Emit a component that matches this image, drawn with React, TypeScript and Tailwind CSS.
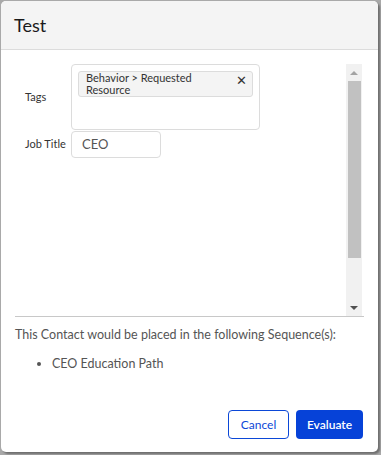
import React from 'react';

const App = () => {
  return (
    <div className="w-[381px] h-[455px] bg-[#a9a9a9] pl-px pt-px" style={{ fontFamily: 'Lato, "Open Sans", sans-serif' }}>
      <div className="w-[377px] h-[451px] bg-white rounded-[5px] flex flex-col overflow-hidden shadow-[2px_2px_2px_rgba(0,0,0,0.35)]">
        {/* header */}
        <div className="h-[49px] shrink-0 bg-[#f4f4f4] border-b border-[#dcdcdc] flex items-center px-[13px]">
          <h2 className="text-[18px] text-[#1a1a1a]">Test</h2>
        </div>

        {/* scroll area */}
        <div className="mt-[14px] mx-[14px] h-[253px] flex border-b border-[#c8c8c8]">
          <div className="flex-1 pl-[10px] flex flex-col gap-px">
            <div className="flex items-center">
              <span className="w-[46px] text-[11px] text-[#333]">Tags</span>
              <div className="w-[189px] h-[66px] border border-[#dcdcdc] rounded-[4px] p-[6px]">
                <div className="flex items-start justify-between bg-[#f4f4f4] border border-[#dcdcdc] rounded-[3px] pl-[7px] pr-[5px]">
                  <span className="text-[11px] leading-[12px] text-[#333]">
                    Behavior &gt; Requested
                    <br />
                    Resource
                  </span>
                  <span className="text-[13px] leading-[16px] text-[#333]">✕</span>
                </div>
              </div>
            </div>
            <div className="flex items-center">
              <span className="w-[46px] text-[11px] text-[#333]">Job Title</span>
              <div className="w-[90px] h-[27px] border border-[#dcdcdc] rounded-[4px] flex items-center px-[10px] text-[13px] text-[#555]">
                CEO
              </div>
            </div>
          </div>
          <div className="w-[16px] mr-[2px] bg-[#f1f1f1] flex flex-col items-center">
            <div className="h-[17px] flex items-center justify-center">
              <div className="w-0 h-0 border-l-[4px] border-r-[4px] border-b-[4px] border-l-transparent border-r-transparent border-b-[#a3a3a3]" />
            </div>
            <div className="w-[13px] h-[177px] bg-[#c1c1c1]" />
            <div className="flex-1" />
            <div className="h-[17px] flex items-center justify-center">
              <div className="w-0 h-0 border-l-[4px] border-r-[4px] border-t-[4px] border-l-transparent border-r-transparent border-t-[#505050]" />
            </div>
          </div>
        </div>

        {/* result */}
        <div className="px-[14px] pt-[9px] text-[12.5px] text-[#555]">
          <p>This Contact would be placed in the following Sequence(s):</p>
          <ul className="list-disc pl-[37px] mt-[10px]">
            <li>CEO Education Path</li>
          </ul>
        </div>

        <div className="flex-1" />

        {/* footer */}
        <div className="flex justify-end gap-[7px] px-[15px] pb-[13px]">
          <button className="w-[61px] h-[29px] rounded-[4px] border border-[#0b47d7] text-[#0b47d7] text-[12px] bg-white">
            Cancel
          </button>
          <button className="w-[67px] h-[29px] rounded-[4px] bg-[#0642d8] text-white text-[12px] font-semibold">
            Evaluate
          </button>
        </div>
      </div>
    </div>
  );
};

export default App;
